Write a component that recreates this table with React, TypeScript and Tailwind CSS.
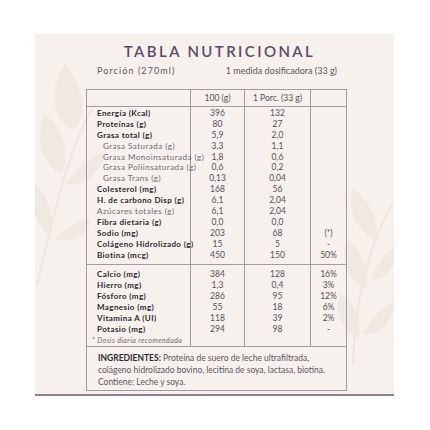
import React from "react";

type Row = [string, string, string, string, "b" | "sub" | "light"];

const main: Row[] = [
  ["Energía (Kcal)", "396", "132", "", "b"],
  ["Proteínas (g)", "80", "27", "", "b"],
  ["Grasa total (g)", "5,9", "2,0", "", "b"],
  ["Grasa Saturada (g)", "3,3", "1,1", "", "sub"],
  ["Grasa Monoinsaturada (g)", "1,8", "0,6", "", "sub"],
  ["Grasa Poliinsaturada (g)", "0,6", "0,2", "", "sub"],
  ["Grasa Trans (g)", "0,13", "0,04", "", "sub"],
  ["Colesterol (mg)", "168", "56", "", "b"],
  ["H. de carbono Disp (g)", "6,1", "2,04", "", "b"],
  ["Azúcares totales (g)", "6,1", "2,04", "", "light"],
  ["Fibra dietaria (g)", "0,0", "0,0", "", "b"],
  ["Sodio (mg)", "203", "68", "(*)", "b"],
  ["Colágeno Hidrolizado (g)", "15", "5", "-", "b"],
  ["Biotina (mcg)", "450", "150", "50%", "b"],
];

const minerals: Row[] = [
  ["Calcio (mg)", "384", "128", "16%", "b"],
  ["Hierro (mg)", "1,3", "0,4", "3%", "b"],
  ["Fósforo (mg)", "286", "95", "12%", "b"],
  ["Magnesio (mg)", "55", "18", "6%", "b"],
  ["Vitamina A (UI)", "118", "39", "2%", "b"],
  ["Potasio (mg)", "294", "98", "-", "b"],
];

// faint leaf sprigs behind the card
function Leaves() {
  return (
    <svg className="absolute inset-0" width="359" height="362" viewBox="0 0 359 362">
      <g fill="#ede6df" opacity="0.7">
        <path d="M2 250 C 20 180, 30 120, 60 70" stroke="#ebe3dc" strokeWidth="2" fill="none" />
        <path d="M40 95 C 20 90, 10 60, 30 30 C 50 55, 52 80, 40 95 Z" />
        <path d="M26 140 C 5 130, 0 100, 10 80 C 32 100, 35 125, 26 140 Z" />
        <path d="M30 150 C 45 130, 60 120, 70 118 C 66 140, 50 152, 30 150 Z" />
        <path d="M14 200 C 0 190, -5 170, 0 150 C 15 165, 20 185, 14 200 Z" />
        <path d="M20 205 C 35 190, 48 185, 56 185 C 52 200, 38 210, 20 205 Z" />
        <path d="M357 170 C 335 210, 320 260, 318 330" stroke="#ebe3dc" strokeWidth="2" fill="none" />
        <path d="M340 205 C 320 195, 312 175, 318 155 C 338 170, 345 190, 340 205 Z" />
        <path d="M330 255 C 310 245, 305 222, 312 205 C 330 222, 335 240, 330 255 Z" />
        <path d="M335 245 C 345 225, 355 215, 362 212 C 362 232, 352 246, 335 245 Z" />
        <path d="M323 305 C 305 295, 300 275, 305 258 C 322 272, 328 290, 323 305 Z" />
        <path d="M328 300 C 338 280, 350 270, 360 268 C 358 288, 346 302, 328 300 Z" />
      </g>
    </svg>
  );
}

function Section({ rows, note }: { rows: Row[]; note?: boolean }) {
  const cell = "flex flex-col border-r border-[#a39aa8]";
  return (
    <div className="flex border-x border-b border-[#a39aa8]">
      <div className={`${cell} w-[104px] pl-[10px] ${note ? "pt-[4px] pb-[2px]" : "pt-[1px] pb-[4px]"}`}>
        {rows.map((r) => (
          <div
            key={r[0]}
            className={`h-[10.9px] leading-[10.9px] whitespace-nowrap ${
              r[4] === "b"
                ? "text-[8px] font-bold tracking-[0.05em] text-[#2e2932]"
                : r[4] === "sub"
                ? "pl-[6px] text-[8px] tracking-[0.06em] text-[#6f6875]"
                : "text-[8px] tracking-[0.06em] text-[#6f6875]"
            }`}
          >
            {r[0]}
          </div>
        ))}
        {note && (
          <div className="-ml-[5px] mt-[1px] h-[8px] text-[7px] leading-[8px] italic tracking-[0.06em] text-[#6f6875]">
            * Dosis diaria recomendada
          </div>
        )}
      </div>
      {[1, 2, 3].map((c) => (
        <div
          key={c}
          className={`flex flex-col items-center text-[8.5px] text-[#57505c] ${
            c === 1 ? "w-[54px] border-r border-[#a39aa8]" : c === 2 ? "w-[66px] border-r border-[#a39aa8]" : "flex-1"
          } ${note ? "pt-[4px]" : "pt-[1px]"}`}
        >
          {rows.map((r) => (
            <div key={r[0]} className="h-[10.9px] leading-[10.9px]">
              {r[c]}
            </div>
          ))}
        </div>
      ))}
    </div>
  );
}

export default function App() {
  return (
    <div className="h-[430px] w-[430px] bg-white px-[35px] pt-[34px]" style={{ fontFamily: "Lato, 'Open Sans', sans-serif" }}>
      <div className="relative h-[362px] w-[359px] overflow-hidden border-b-2 border-[#8d8294] bg-[#f6f1ec]">
        <Leaves />
        <div className="relative">
          <h1 className="pl-[10px] pt-[8px] text-center text-[15px] font-semibold leading-[18px] tracking-[0.16em] text-[#5b4b6a]">
            TABLA NUTRICIONAL
          </h1>
          <div className="mt-[6px] flex text-[9px] leading-[10px] text-[#5d5662]">
            <span className="ml-[62px] tracking-[0.12em]">Porción (270ml)</span>
            <span className="ml-[auto] mr-[57px]">1 medida dosificadora (33 g)</span>
          </div>
          <div className="ml-[51px] mt-[13px] w-[261px]">
            <div className="flex h-[18px] border border-[#a39aa8] text-[8.5px] text-[#57505c]">
              <div className="w-[104px] border-r border-[#a39aa8]" />
              <div className="flex w-[54px] items-center justify-center border-r border-[#a39aa8]">100 (g)</div>
              <div className="flex w-[66px] items-center justify-center border-r border-[#a39aa8]">1 Porc. (33 g)</div>
              <div className="flex-1" />
            </div>
            <Section rows={main} />
            <Section rows={minerals} note />
            <div className="border-x border-b border-[#a39aa8] pb-[2px] pl-[11px] pt-[5px] text-[8.5px] leading-[12px] text-[#5d5662]">
              <span className="font-bold text-[#2e2932]">INGREDIENTES:</span> Proteína de suero de leche ultrafiltrada,
              <br />
              colágeno hidrolizado bovino, lecitina de soya, lactasa, biotina.
              <br />
              Contiene: Leche y soya.
            </div>
          </div>
        </div>
      </div>
    </div>
  );
}
